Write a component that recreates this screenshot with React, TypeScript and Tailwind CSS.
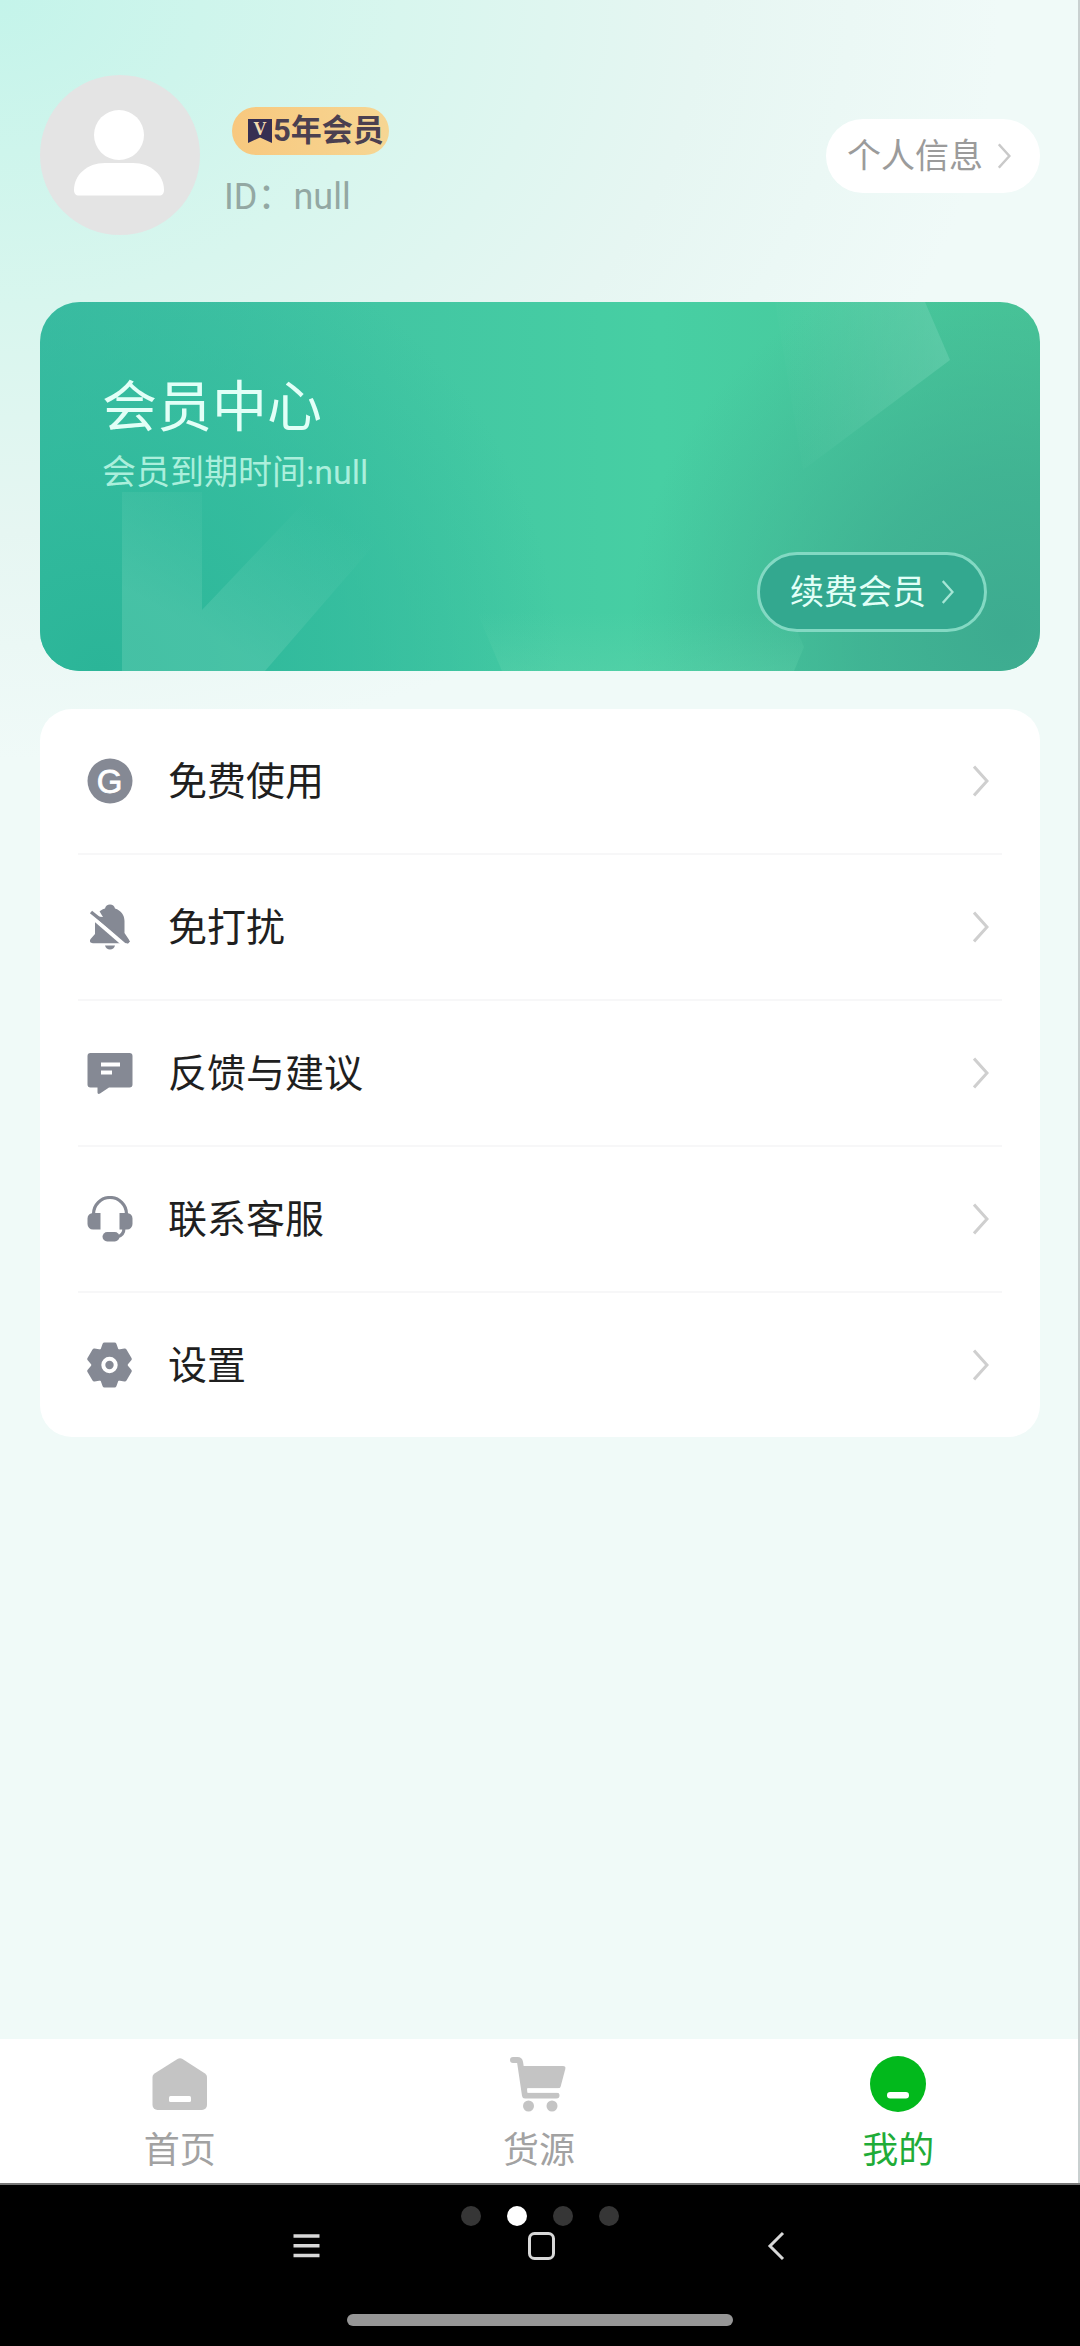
import type { ReactNode } from 'react';

interface MenuItem {
  label: string;
  icon: ReactNode;
}

interface TabItem {
  label: string;
  icon: ReactNode;
  active?: boolean;
}

const GRAY = '#858994';

const FreeIcon = () => (
  <svg viewBox="0 0 46 46" className="size-[46px]" aria-hidden="true">
    <circle cx="23" cy="23" r="22.5" fill={GRAY} />
    <text x="22.5" y="34.5" textAnchor="middle" fontFamily="Liberation Sans, sans-serif" fontSize="33" fill="#fff" stroke="#fff" strokeWidth="0.8">
      G
    </text>
  </svg>
);

const MuteIcon = () => (
  <svg viewBox="0 0 46 46" className="size-[46px]" aria-hidden="true">
    <path
      d="M23 0.5c2.600 0 4.400 1.600 5 3.900C34 6.300 37.500 11 37.500 17v12l4.200 6.200c1.200 2.200 0.200 4-2.200 4H6c-2.800 0-3.800-2-2.400-4.200L8 30V17c0-6 3.800-10.700 10-12.600 0.600-2.300 2.400-3.900 5-3.900z"
      fill={GRAY}
    />
    <path d="M18 41.500h10c-0.700 2.600-2.500 4-5 4s-4.300-1.400-5-4z" fill={GRAY} />
    <path d="M0 4L8 0L16 13L5 12z" fill="#fff" />
    <path d="M1 9.500L38 41.500" stroke="#fff" strokeWidth="4" />
    <path d="M4 8L42 38.500" stroke={GRAY} strokeWidth="3.500" />
  </svg>
);

const FeedbackIcon = () => (
  <svg viewBox="0 0 46 46" className="size-[46px]" aria-hidden="true">
    <path
      d="M3.500 3h39a3 3 0 0 1 3 3v28.500a3 3 0 0 1-3 3H22l-9 6c-1.500 0.900-2.500 0.300-2.500-1.200v-4.800h-7a3 3 0 0 1-3-3V6a3 3 0 0 1 3-3z"
      fill={GRAY}
    />
    <path d="M14 14.500h19M14 22.500h11" stroke="#fff" strokeWidth="4" />
  </svg>
);

const ServiceIcon = () => (
  <svg viewBox="0 0 46 46" className="size-[46px]" aria-hidden="true">
    <path d="M6.500 20v-2a16.500 16.500 0 0 1 33 0v2" fill="none" stroke={GRAY} strokeWidth="3.200" />
    <path
      d="M13.500 17v16.500H6a5.500 5.500 0 0 1-5.500-5.500v-5.500A5.500 5.500 0 0 1 6 17zM32.500 17v16.500H40a5.500 5.500 0 0 0 5.500-5.500v-5.500A5.500 5.500 0 0 0 40 17z"
      fill={GRAY}
    />
    <path d="M37 32c0 5-2.500 8-7 9" fill="none" stroke={GRAY} strokeWidth="3.200" />
    <rect x="15.500" y="36" width="17" height="9.500" rx="4.700" fill={GRAY} />
  </svg>
);

const SettingsIcon = () => (
  <svg viewBox="0 0 46 46" className="size-[46px]" aria-hidden="true">
    <circle cx="22.500" cy="23" r="18" fill={GRAY} />
    <g fill={GRAY} stroke={GRAY} strokeWidth="4" strokeLinejoin="round">
      <path d="M17.500 2.500h10l2.500 7H15zM17.500 43.500h10l2.500-7H15z" />
      <path d="M17.500 2.500h10l2.500 7H15zM17.500 43.500h10l2.500-7H15z" transform="rotate(60 22.500 23)" />
      <path d="M17.500 2.500h10l2.500 7H15zM17.500 43.500h10l2.500-7H15z" transform="rotate(120 22.500 23)" />
    </g>
    <circle cx="22.500" cy="23" r="6.200" fill="none" stroke="#fff" strokeWidth="4" />
  </svg>
);

const HomeIcon = () => (
  <svg viewBox="0 0 58 58" className="size-[58px]" aria-hidden="true">
    <path
      d="M26.500 4a5 5 0 0 1 5 0L54 18.500c1.500 1.200 2 2.200 2 4V50a5 5 0 0 1-5 5H6.500a5 5 0 0 1-5-5V22.500c0-1.800 0.500-2.800 2-4z"
      fill="#c4c4c4"
    />
    <rect x="18" y="41" width="22" height="6" rx="1.500" fill="#fff" />
  </svg>
);

const CartIcon = () => (
  <svg viewBox="0 0 58 58" className="size-[58px]" aria-hidden="true">
    <path d="M3 5h4.500c1.600 0 2.300 0.800 2.600 2.600L15 40.500h31.500" fill="none" stroke="#c4c4c4" strokeWidth="6" strokeLinecap="round" strokeLinejoin="round" />
    <path d="M10 11h43c2 0 2.800 1 2.300 3l-4.500 17c-0.500 1.800-1.500 2.500-3.300 2.500H13z" fill="#c4c4c4" />
    <path d="M17.500 35.500h33" stroke="#fff" strokeWidth="4.500" />
    <circle cx="18.500" cy="51" r="5.500" fill="#c4c4c4" />
    <circle cx="42" cy="51" r="5.500" fill="#c4c4c4" />
  </svg>
);

const MineIcon = () => (
  <svg viewBox="0 0 58 58" className="size-[58px]" aria-hidden="true">
    <circle cx="29" cy="29" r="28" fill="#02b91c" />
    <rect x="18" y="37" width="22" height="6.500" rx="3.200" fill="#fff" />
  </svg>
);

const Chevron = ({ className }: { className: string }) => (
  <svg viewBox="0 0 16 32" className={className} fill="none" stroke="currentColor" strokeWidth="3" aria-hidden="true">
    <path d="M1 1.500L14 16L1 30.500" />
  </svg>
);

const MENU: MenuItem[] = [
  { label: '免费使用', icon: <FreeIcon /> },
  { label: '免打扰', icon: <MuteIcon /> },
  { label: '反馈与建议', icon: <FeedbackIcon /> },
  { label: '联系客服', icon: <ServiceIcon /> },
  { label: '设置', icon: <SettingsIcon /> },
];

const TABS: TabItem[] = [
  { label: '首页', icon: <HomeIcon /> },
  { label: '货源', icon: <CartIcon /> },
  { label: '我的', icon: <MineIcon />, active: true },
];

const ProfileHeader = () => (
  <header className="flex items-start pt-[75px]">
    <svg viewBox="0 0 160 160" className="size-40 shrink-0" role="img" aria-label="头像">
      <circle cx="80" cy="80" r="80" fill="#e4e4e4" />
      <circle cx="79" cy="60" r="25" fill="#fff" />
      <path d="M65 88h28c18 0 31 12 31 27 0 3.500-1.500 5.500-5 5.500H39c-3.500 0-5-2-5-5.500 0-15 13-27 31-27z" fill="#fff" />
    </svg>
    <div className="mt-8 ml-6 flex flex-col items-start gap-4">
      <span className="ml-2 flex h-12 items-center rounded-full bg-linear-to-r from-[#f8c87e] to-[#f6d693] pr-[5px] pl-[15px] text-[31px] leading-[48px] font-bold text-[#4b4050]">
        <svg viewBox="0 0 26 26" className="size-[26px]" aria-hidden="true">
          <path d="M1 1h24v24l-12-5.500L1 25z" fill="#372f52" />
          <text x="13" y="17" textAnchor="middle" fontFamily="Liberation Serif, serif" fontSize="18" fontWeight="700" fill="#f4dcb0">
            V
          </text>
        </svg>
        5年会员
      </span>
      <p className="text-[36px] leading-[52px] text-[#93a8a3]">ID：null</p>
    </div>
    <button type="button" className="mt-11 ml-auto flex h-[74px] items-center rounded-full bg-white px-[21px] text-[34px] text-[#9b9b9b]">
      个人信息
      <Chevron className="mr-2 ml-[15px] h-[26px] w-[13px] text-[#c9c9c9]" />
    </button>
  </header>
);

const MemberCard = () => (
  <section className="relative isolate mt-[67px] flex flex-col overflow-hidden rounded-[40px] bg-linear-to-r from-[#3cbba2] via-[#47cfa3] via-62% to-[#49c698] px-[62px] pt-[69px] pb-[39px]">
    <svg viewBox="0 0 1000 369" preserveAspectRatio="none" className="absolute inset-0 -z-10 size-full" aria-hidden="true">
      <defs>
        <radialGradient id="corner" gradientUnits="userSpaceOnUse" cx="970" cy="330" r="380">
          <stop offset="0" stopColor="#3dab90" />
          <stop offset="0.4" stopColor="#3dab90" stopOpacity="0.7" />
          <stop offset="1" stopColor="#3dab90" stopOpacity="0" />
        </radialGradient>
        <radialGradient id="leftBottom" gradientUnits="userSpaceOnUse" cx="60" cy="369" r="460">
          <stop offset="0" stopColor="#2bb598" />
          <stop offset="0.5" stopColor="#2fba9c" stopOpacity="0.7" />
          <stop offset="1" stopColor="#2fba9c" stopOpacity="0" />
        </radialGradient>
        <linearGradient id="arrow" gradientUnits="userSpaceOnUse" x1="150" y1="369" x2="250" y2="190">
          <stop offset="0.2" stopColor="#5ecbb0" stopOpacity="0.5" />
          <stop offset="1" stopColor="#5ecbb0" stopOpacity="0" />
        </linearGradient>
        <linearGradient id="gem" gradientUnits="userSpaceOnUse" x1="900" y1="30" x2="745" y2="60">
          <stop offset="0" stopColor="#6bd0b0" stopOpacity="0.55" />
          <stop offset="1" stopColor="#6bd0b0" stopOpacity="0.05" />
        </linearGradient>
        <linearGradient id="base" x1="0" y1="1" x2="0" y2="0">
          <stop offset="0" stopColor="#66d6ae" stopOpacity="0.3" />
          <stop offset="1" stopColor="#66d6ae" stopOpacity="0" />
        </linearGradient>
      </defs>
      <rect width="1000" height="369" fill="url(#leftBottom)" />
      <rect width="1000" height="369" fill="url(#corner)" />
      <path d="M82 190h80v118l112-118h106L225 369H82z" fill="url(#arrow)" />
      <path d="M735 0h150l25 58-147 110z" fill="url(#gem)" />
      <path d="M437 310h312l15 35-10 24H462z" fill="url(#base)" />
    </svg>
    <h1 className="text-[55px] leading-[72px] text-[#e2fff7]">会员中心</h1>
    <p className="mt-0.5 text-[34px] leading-[54px] text-[#abefdc]">会员到期时间:null</p>
    <button
      type="button"
      className="-mr-[9px] mt-[53px] flex h-20 items-center self-end rounded-full border-3 border-[#83d9c3] bg-[#33a88f] px-[30px] text-[34px] text-[#e2fff7]"
    >
      续费会员
      <Chevron className="ml-4 h-6 w-3 text-[#a5e6d5]" />
    </button>
  </section>
);

const MenuList = () => (
  <nav className="mt-[38px] rounded-[32px] bg-white px-[38px]">
    <ul className="divide-y-2 divide-[#f7f7f8]">
      {MENU.map((item) => (
        <li key={item.label}>
          <a href="#" className="flex h-36 items-center pr-[13px] pl-[9px] text-[39px] text-[#1f1f1f]">
            {item.icon}
            <span className="ml-[35px] flex-1 pt-0.5">{item.label}</span>
            <Chevron className="h-8 w-4 text-[#cfcfcf]" />
          </a>
        </li>
      ))}
    </ul>
  </nav>
);

const TabBar = () => (
  <nav className="flex bg-white pt-4">
    {TABS.map((tab) => (
      <a
        key={tab.label}
        href="#"
        aria-current={tab.active ? 'page' : undefined}
        className={`flex h-32 flex-1 flex-col items-center text-[36px] leading-[52px] ${tab.active ? 'text-[#1fac38]' : 'text-[#a2a2a2]'}`}
      >
        {tab.icon}
        <span className="mt-3">{tab.label}</span>
      </a>
    ))}
  </nav>
);

const SystemBar = () => (
  <footer className="flex flex-col items-center border-t-2 border-[#777] bg-black pt-[21px] pb-5">
    <div className="flex gap-[26px]">
      <span className="size-5 rounded-full bg-[#363636]" />
      <span className="size-5 rounded-full bg-white" />
      <span className="size-5 rounded-full bg-[#363636]" />
      <span className="size-5 rounded-full bg-[#363636]" />
    </div>
    <div className="mt-1 flex gap-[203px] text-[#d8d8d8]">
      <button type="button" aria-label="菜单">
        <svg viewBox="0 0 32 32" className="size-8" stroke="currentColor" strokeWidth="3.500">
          <path d="M4.500 6h26M4.500 15.700h26M4.500 25.400h26" />
        </svg>
      </button>
      <button type="button" aria-label="主屏幕">
        <svg viewBox="0 0 32 32" className="size-8" fill="none" stroke="currentColor" strokeWidth="3">
          <rect x="5.500" y="3.500" width="24" height="25" rx="5" />
        </svg>
      </button>
      <button type="button" aria-label="返回">
        <svg viewBox="0 0 32 32" className="size-8" fill="none" stroke="currentColor" strokeWidth="3">
          <path d="M24 3L11 16L24 29" />
        </svg>
      </button>
    </div>
    <span className="mt-[52px] h-3 w-[386px] rounded-full bg-[#969696]" />
  </footer>
);

export default function App() {
  return (
    <div lang="zh-CN" className="flex min-h-screen flex-col bg-[#f0faf8] font-[Roboto,'Noto_Sans_CJK_SC',sans-serif]">
      <div className="flex flex-1 flex-col border-r-2 border-[#c9d0d0]">
        <main className="flex-1 bg-[radial-gradient(ellipse_1000px_760px_at_0_0,#c4f4ea_0%,#d8f6ee_40%,#e6f6f2_70%,#f0faf800_100%)] pr-[38px] pl-10">
          <ProfileHeader />
          <MemberCard />
          <MenuList />
        </main>
        <TabBar />
      </div>
      <SystemBar />
    </div>
  );
}
